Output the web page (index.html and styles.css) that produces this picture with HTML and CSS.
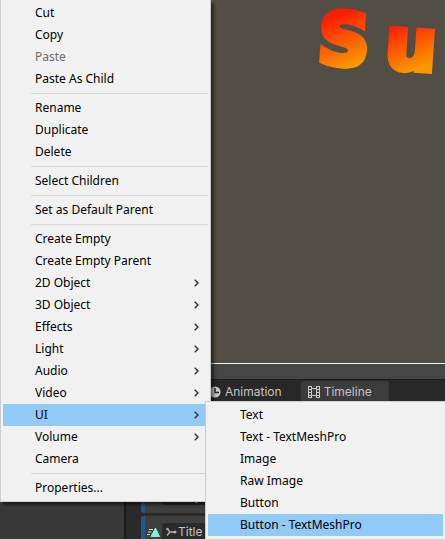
FILE: index.html
```html
<!DOCTYPE html>
<html lang="en">
<head>
<meta charset="utf-8">
<title>Editor</title>
<link rel="stylesheet" href="styles.css">
</head>
<body>
<main class="editor">
  <section class="scene">
    <h1 class="logo"><span class="logo-cap">S</span><span class="logo-low">u</span></h1>
  </section>
  <div class="toolbar"></div>
  <div class="tabs">
    <button class="tab" type="button">
      <svg class="tab-icon" viewBox="0 0 12 12"><circle cx="6" cy="6" r="5.6" fill="#c8c8c8"/><path d="M6 2v4.5h4" fill="none" stroke="#282828" stroke-width="1.5"/></svg>
      Animation
    </button>
    <button class="tab tab-active" type="button">
      <svg class="tab-icon" viewBox="0 0 12 12"><path d="M.5 0v12M3.500 0v12M8.500 0v12M11.500 0v12M3 2.500h6M3 9.500h6M0 .5h4M0 3.500h4M0 6.500h4M0 9.500h4M0 11.500h4M8 .5h4M8 3.500h4M8 6.500h4M8 9.500h4M8 11.500h4" fill="none" stroke="#c8c8c8"/></svg>
      Timeline
    </button>
  </div>
  <div class="panels">
    <div class="hierarchy"></div>
    <div class="timeline">
      <div class="track track-first"><div class="field">
        <svg class="field-icon" viewBox="0 0 11 10"><path d="M1 1l3 4-3 4M4 5h5" fill="none" stroke="#5fd8bd" stroke-width="1.500"/></svg>Player</div></div>
      <div class="track">
        <svg class="track-icon" viewBox="0 0 13 10"><path d="M8.500 1L12.500 9.500H4z" fill="#7ff5dc" stroke="#7ff5dc" stroke-linejoin="round"/><path d="M2 2.500h4M1 5h3.500M0 7.500h3" stroke="#d0d0d0"/></svg>
        <div class="field"><svg class="field-icon" viewBox="0 0 11 10"><path d="M1 1.500l3 3.500-3 3.500M4 5h5" fill="none" stroke="#b0b0b0" stroke-width="1.400"/><circle cx="9" cy="5" r="1.500" fill="#b0b0b0"/><circle cx="1.500" cy="2" r="1.200" fill="#b0b0b0"/></svg>Title</div>
      </div>
    </div>
  </div>
</main>

<nav class="menu menu-main">
  <button class="item" type="button">Cut</button>
  <button class="item" type="button">Copy</button>
  <button class="item" type="button" disabled>Paste</button>
  <button class="item" type="button">Paste As Child</button>
  <hr class="rule">
  <button class="item" type="button">Rename</button>
  <button class="item" type="button">Duplicate</button>
  <button class="item" type="button">Delete</button>
  <hr class="rule">
  <button class="item" type="button">Select Children</button>
  <hr class="rule">
  <button class="item" type="button">Set as Default Parent</button>
  <hr class="rule">
  <button class="item" type="button">Create Empty</button>
  <button class="item" type="button">Create Empty Parent</button>
  <button class="item" type="button">2D Object<svg class="arrow" viewBox="0 0 5 8"><path d="M.7.7L4 4 .7 7.300"/></svg></button>
  <button class="item" type="button">3D Object<svg class="arrow" viewBox="0 0 5 8"><path d="M.7.7L4 4 .7 7.300"/></svg></button>
  <button class="item" type="button">Effects<svg class="arrow" viewBox="0 0 5 8"><path d="M.7.7L4 4 .7 7.300"/></svg></button>
  <button class="item" type="button">Light<svg class="arrow" viewBox="0 0 5 8"><path d="M.7.7L4 4 .7 7.300"/></svg></button>
  <button class="item" type="button">Audio<svg class="arrow" viewBox="0 0 5 8"><path d="M.7.7L4 4 .7 7.300"/></svg></button>
  <button class="item" type="button">Video<svg class="arrow" viewBox="0 0 5 8"><path d="M.7.7L4 4 .7 7.300"/></svg></button>
  <button class="item item-active" type="button">UI<svg class="arrow" viewBox="0 0 5 8"><path d="M.7.7L4 4 .7 7.300"/></svg></button>
  <button class="item" type="button">Volume<svg class="arrow" viewBox="0 0 5 8"><path d="M.7.7L4 4 .7 7.300"/></svg></button>
  <button class="item" type="button">Camera</button>
  <hr class="rule">
  <button class="item" type="button">Properties...</button>
</nav>

<nav class="menu menu-sub">
  <button class="item" type="button">Text</button>
  <button class="item" type="button">Text - TextMeshPro</button>
  <button class="item" type="button">Image</button>
  <button class="item" type="button">Raw Image</button>
  <button class="item" type="button">Button</button>
  <button class="item item-active" type="button">Button - TextMeshPro</button>
</nav>
</body>
</html>
```
FILE: styles.css
```css
* { box-sizing: border-box; }

body {
  margin: 0;
  height: 100vh;
  overflow: hidden;
  position: relative;
  background: #282828;
  font-family: "Noto Sans", "Open Sans", sans-serif;
}

button {
  border: 0;
  background: none;
  font: inherit;
  text-align: left;
}

.editor {
  height: 100%;
  display: flex;
  flex-direction: column;
}

.scene {
  flex: 0 0 364px;
  display: flex;
  justify-content: flex-end;
  padding-right: 8px;
  background: #534e45;
  border-bottom: 1px solid #f4f4f4;
}

.logo {
  display: flex;
  align-items: flex-start;
  gap: 8px;
  margin: 0;
  height: 84px;
  font: bold 72px/84px "DejaVu Sans", sans-serif;
  transform: rotate(4deg);
}

.logo span {
  color: transparent;
  background: linear-gradient(155deg, #ff1c00 25%, #fa9600 75%);
  -webkit-background-clip: text;
  background-clip: text;
  -webkit-text-stroke: 6px transparent;
}

.logo-cap { padding: 0 8px; }

.toolbar {
  flex: 0 0 16px;
  background: #464646;
  border-bottom: 1px solid #1c1c1c;
}

.tabs {
  flex: 0 0 22px;
  display: flex;
  padding: 1px 0 0 206px;
  background: #282828;
}

.tab {
  display: flex;
  align-items: center;
  gap: 4px;
  padding: 0 19px 0 3px;
  color: #c4c4c4;
  font: 12px/20px Inter, sans-serif;
}

.tab-active {
  padding: 0 17px 0 7px;
  background: #3c3c3c;
  border-radius: 3px 3px 0 0;
}

.tab-icon { width: 12px; height: 12px; }

.panels {
  flex: 1;
  display: flex;
  min-height: 0;
}

.hierarchy {
  flex: 0 0 126px;
  background: #383838;
  border-right: 2px solid #1a1a1a;
}

.timeline {
  flex: 1;
  display: flex;
  flex-direction: column;
  gap: 3px;
  padding: 84px 0 0 15px;
  background: #2a2a2a;
}

.track {
  flex: 0 0 27px;
  display: flex;
  align-items: center;
  gap: 2px;
  padding: 4px 0 0 2px;
  background: #3f3f3f;
  border-left: 4px solid #235590;
  border-radius: 3px 0 0 3px;
}

.track-first { padding: 0 0 7px 16px; }

.track-icon { width: 13px; height: 10px; }

.field {
  display: flex;
  align-items: center;
  gap: 1px;
  height: 18px;
  padding-left: 4px;
  flex: 1;
  background: #2a2a2a;
  border-radius: 3px;
  color: #c4c4c4;
  font: 12px/18px Inter, sans-serif;
}

.field-icon { width: 11px; height: 10px; }

.menu {
  position: absolute;
  display: flex;
  flex-direction: column;
  padding: 2px;
  background: #f1f1f1;
  border: 1px solid #cccccc;
}

.menu-main {
  top: 0;
  left: 0;
  width: 211px;
  border-top: 0;
  box-shadow: 3px 3px 3px rgba(0, 0, 0, 0.5);
}

.menu-sub {
  top: 401px;
  left: 205px;
  right: 0;
  bottom: 0;
  border-right: 0;
  border-bottom: 0;
}

.item {
  flex: 0 0 22px;
  display: flex;
  align-items: center;
  justify-content: space-between;
  padding: 0 9px 0 32px;
  color: #000000;
  font-size: 12px;
  line-height: 22px;
}

.item:disabled { color: #6d6d6d; }

.item-active { background: #91c9f7; }

.rule {
  width: auto;
  height: 1px;
  margin: 3px 0 3px 28px;
  border: 0;
  background: #d7d7d7;
}

.arrow {
  width: 5px;
  height: 8px;
  fill: none;
  stroke: #333333;
  stroke-width: 1.4;
}
```
